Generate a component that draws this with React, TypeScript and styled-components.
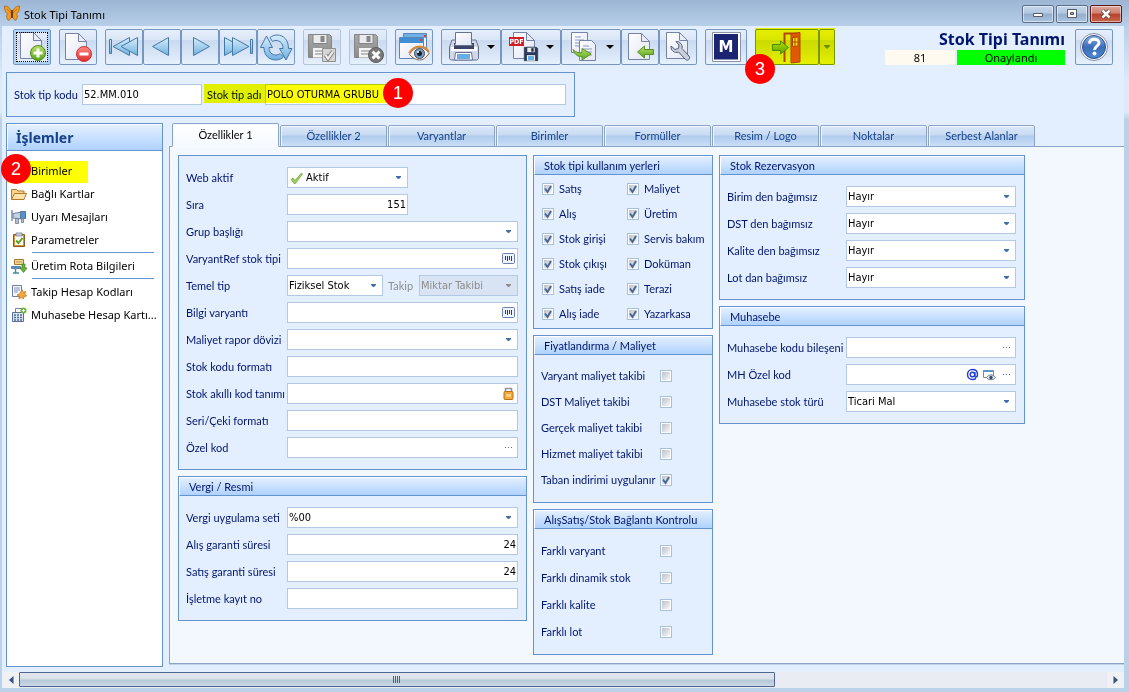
import React from "react";
import styled, { createGlobalStyle, css } from "styled-components";

const GlobalStyle = createGlobalStyle`
  *, *::before, *::after { box-sizing: border-box; }
  body {
    margin: 0;
    background: #bad1ea;
    color: #00156e;
    font-family: Lato, "Noto Sans", sans-serif;
    font-size: 11px;
    line-height: 14px;
  }
  button, input, select { font: inherit; color: inherit; margin: 0; padding: 0; }
`;

const chromeFont = `"Noto Sans", "Open Sans", sans-serif`;
const valueFont = `"DejaVu Sans Condensed", "DejaVu Sans", sans-serif`;
const line = "#6593cf";
const fieldLine = "#b3c8e2";

/* ---------- window frame ---------- */

const Window = styled.div`
  display: flex;
  flex-direction: column;
  min-height: 100vh;
  padding: 0 5px 4px 2px;
  background: linear-gradient(#9bb5d3 0, #b8cfe9 26px, #dceafa 80px, #dceafa 112px, #bad1ea 120px);
`;

const TitleBar = styled.header`
  display: flex;
  align-items: center;
  gap: 4px;
  height: 26px;
  padding-left: 2px;
  color: #000;
  font-family: ${chromeFont};
`;

const TitleText = styled.span`
  flex: 1;
  padding-top: 3px;
`;

const WindowButtons = styled.div`
  display: flex;
  gap: 2px;
  padding: 2px 2px 0 0;
`;

const WindowButton = styled.button<{ $danger?: boolean }>`
  display: grid;
  place-items: center;
  width: 32px;
  height: 18px;
  border: 1px solid ${(p) => (p.$danger ? "#5b1d1c" : "#5b6f8a")};
  border-radius: 2px;
  box-shadow: inset 0 0 0 1px rgba(255, 255, 255, 0.5);
  background: ${(p) =>
    p.$danger
      ? "linear-gradient(#dfa79d, #cf8172 45%, #b5412b 50%, #c9674c)"
      : "linear-gradient(#c4d6ea, #b3c8e0 45%, #93adcb 50%, #a9c3df)"};
`;

const Client = styled.main`
  display: flex;
  flex: 1;
  flex-direction: column;
  background: #e3efff;
`;

/* ---------- toolbar ---------- */

const Toolbar = styled.div`
  display: flex;
  gap: 8px;
  padding: 3px 11px 7px;
`;

const ButtonGroup = styled.div`
  position: relative;
  display: flex;
`;

const ToolButton = styled.button<{ $width?: number; $active?: boolean }>`
  display: block;
  flex: none;
  width: ${(p) => p.$width ?? 38}px;
  height: 36px;
  border: 1px solid #7797c3;
  border-radius: 2px;
  background: linear-gradient(#e6eefa, #dbe6f6 28%, #cbdaf0 30%, #d8e5f6 70%, #e6f1fd);
  ${(p) =>
    p.$active &&
    css`
      outline: 1px dotted #000;
      outline-offset: -4px;
      box-shadow: inset 0 0 0 2px #acd3f6;
    `}
  &:disabled { border-color: #b3c4dc; }
  svg { display: block; }
`;

const TitleBlock = styled.div`
  display: flex;
  flex-direction: column;
  align-items: flex-end;
  gap: 1px;
  margin-left: auto;
  padding-right: 2px;
  font-family: ${chromeFont};
`;

const PageTitle = styled.h1`
  margin: 0;
  font-size: 16px;
  line-height: 20px;
`;

const StatusRow = styled.div`
  display: flex;
  gap: 2px;
  color: #000;
`;

const Status = styled.span<{ $width: number; $bg: string }>`
  width: ${(p) => p.$width}px;
  line-height: 15px;
  text-align: center;
  background: ${(p) => p.$bg};
`;

/* ---------- annotations ---------- */

const Highlight = styled.span<{ $width: number; $height: number; $top?: number }>`
  position: absolute;
  left: 0;
  top: ${(p) => p.$top ?? 0}px;
  width: ${(p) => p.$width}px;
  height: ${(p) => p.$height}px;
  background: #ff0;
  mix-blend-mode: multiply;
  pointer-events: none;
`;

const Badge = styled.span<{ $left: number; $top: number }>`
  position: absolute;
  z-index: 2;
  left: ${(p) => p.$left}px;
  top: ${(p) => p.$top}px;
  width: 30px;
  height: 30px;
  border-radius: 50%;
  background: #f00;
  color: #fff;
  font: 18px/30px "Liberation Sans", sans-serif;
  text-align: center;
`;

/* ---------- form parts ---------- */

const FieldBox = styled.span<{ $width?: number; $disabled?: boolean }>`
  display: flex;
  align-items: center;
  flex: ${(p) => (p.$width ? `0 0 ${p.$width}px` : "1")};
  min-width: 0;
  height: 21px;
  border: 1px solid ${fieldLine};
  background: ${(p) => (p.$disabled ? "#d8e4f4" : "#fff")};
  color: ${(p) => (p.$disabled ? "#8d8d8d" : "#000")};
  font-family: ${valueFont};
`;

const TextInput = styled.input<{ $right?: boolean }>`
  flex: 1;
  min-width: 0;
  height: 19px;
  padding: 0 1px;
  border: 0;
  outline: 0;
  background: none;
  text-align: ${(p) => (p.$right ? "right" : "left")};
`;

const SelectBox = styled(FieldBox)`
  display: grid;
  align-items: center;
  > * { grid-area: 1 / 1; }
  > svg { pointer-events: none; }
  > svg:last-child { justify-self: end; margin-right: 5px; }
`;

const NativeSelect = styled.select<{ $icon?: boolean }>`
  appearance: none;
  width: 100%;
  height: 19px;
  padding: 0 16px 0 ${(p) => (p.$icon ? 18 : 1)}px;
  border: 0;
  outline: 0;
  background: none;
  &:disabled { opacity: 1; }
`;

const FieldButton = styled.button`
  display: grid;
  flex: none;
  place-items: center;
  width: 17px;
  height: 19px;
  border: 0;
  background: none;
`;

const FieldRow = styled.div<{ $label: number }>`
  display: flex;
  align-items: center;
  min-width: 0;
  > label:first-child { flex: 0 0 ${(p) => p.$label}px; min-width: 0; white-space: nowrap; }
`;

const MutedLabel = styled.label`
  flex: 0 0 36px;
  padding-left: 5px;
  color: #8d8d8d;
`;

const HeaderPanel = styled.form`
  display: flex;
  align-items: center;
  width: 569px;
  height: 45px;
  margin: 0 4px 6px;
  padding: 0 8px 0 7px;
  border: 1px solid ${line};
`;

const NameGroup = styled.div`
  position: relative;
  display: flex;
  flex: 1;
  align-items: center;
  min-width: 0;
  margin-left: 2px;
  > label { flex: 0 0 61px; padding-left: 3px; white-space: nowrap; }
`;

const CodeGroup = styled(FieldRow)`
  flex: 0 0 188px;
`;

/* ---------- body ---------- */

const Body = styled.div`
  display: flex;
  flex: 1;
  gap: 6px;
  padding: 0 0 5px 4px;
`;

const Sidebar = styled.nav`
  flex: 0 0 157px;
  min-width: 0;
  border: 1px solid ${line};
  background: #fff;
  font-family: ${chromeFont};
`;

const SidebarTitle = styled.h2`
  margin: 0;
  height: 26px;
  padding-left: 8px;
  border: 1px solid #fff;
  border-width: 1px 0 0 1px;
  box-shadow: 0 1px ${line};
  background: linear-gradient(#e3efff, #afd2ff);
  color: #15428b;
  font-size: 14px;
  line-height: 25px;
`;

const SidebarList = styled.ul`
  margin: 0;
  padding: 9px 0 0;
  list-style: none;
`;

const SidebarItem = styled.li<{ $rule?: boolean }>`
  position: relative;
  ${(p) =>
    p.$rule &&
    css`
      padding-bottom: 3px;
      background: linear-gradient(${line}, ${line}) 25px 24px / 122px 1px no-repeat;
    `}
`;

const SidebarLink = styled.a`
  display: flex;
  align-items: center;
  gap: 4px;
  height: 23px;
  padding-left: 4px;
  color: #000;
  text-decoration: none;
  white-space: nowrap;
  svg { flex: none; }
`;

const TabArea = styled.section`
  display: flex;
  flex: 1;
  flex-direction: column;
  min-width: 0;
  margin-bottom: 3px;
`;

const TabList = styled.div`
  display: flex;
  align-items: flex-end;
  gap: 1px;
  height: 24px;
  margin-bottom: -1px;
  padding-left: 3px;
`;

const Tab = styled.button<{ $active?: boolean }>`
  width: 107px;
  height: ${(p) => (p.$active ? 24 : 22)}px;
  border: 1px solid #8ba4c7;
  border-radius: 2px 2px 0 0;
  color: #15428b;
  box-shadow: inset 1px 1px #f2f7fd;
  background: linear-gradient(#dbe8f8, #c8daf2 45%, #afcbed 50%, #c9def8);
  ${(p) =>
    p.$active &&
    css`
      z-index: 1;
      border-bottom-color: #f8fbff;
      color: #000;
      background: linear-gradient(#fff, #f5f9ff);
    `}
`;

const TabPage = styled.div`
  display: flex;
  flex: 1;
  align-items: flex-start;
  gap: 6px;
  padding: 8px;
  border: 1px solid #8ba4c7;
  border-right: 0;
  box-shadow: 0 1px #c3d3e8;
  background: #f3f8ff;
`;

const Column = styled.div<{ $width: number }>`
  display: flex;
  flex: 0 0 ${(p) => p.$width}px;
  flex-direction: column;
  gap: 6px;
  min-width: 0;
`;

const PanelBox = styled.section`
  border: 1px solid ${line};
  background: #e3efff;
`;

const PanelTitle = styled.h3`
  margin: 0;
  height: 19px;
  padding-left: 9px;
  border: 1px solid #fff;
  border-right: 0;
  border-bottom-color: ${line};
  background: linear-gradient(#e3efff, #afd2ff);
  font-size: 11px;
  font-weight: 400;
  line-height: 17px;
  white-space: nowrap;
`;

const Fields = styled.div`
  display: flex;
  flex-direction: column;
  gap: 6px;
  padding: 11px 8px 11px 7px;
`;

const CheckGrid = styled.div`
  display: grid;
  grid-template-columns: 85px minmax(0, 1fr);
  grid-auto-rows: 25px;
  padding: 1px 0 2px 8px;
`;

const CheckRows = styled.div<{ $row: number }>`
  display: grid;
  grid-auto-rows: ${(p) => p.$row}px;
  padding: 8px 40px 9px 7px;
`;

const CheckRow = styled.div<{ $split?: boolean }>`
  display: flex;
  align-items: center;
  gap: ${(p) => (p.$split ? 2 : 5)}px;
  min-width: 0;
  justify-content: ${(p) => (p.$split ? "space-between" : "flex-start")};
  white-space: nowrap;
`;

const CheckBox = styled.span`
  display: grid;
  flex: none;
  > * { grid-area: 1 / 1; }
  > svg { pointer-events: none; }
`;

const NativeCheck = styled.input`
  appearance: none;
  width: 12px;
  height: 12px;
  border: 1px solid #a8c0de;
  background: linear-gradient(135deg, #bcc2ca, #f7f8f9) content-box, #fff;
  && { padding: 1px; }
`;

/* ---------- scroll bar ---------- */

const ScrollBar = styled.div`
  display: flex;
  align-items: center;
  height: 16px;
  background: #f0f1f4;
`;

const ScrollArrow = styled.button`
  display: grid;
  place-items: center;
  width: 17px;
  height: 16px;
  border: 0;
  background: none;
`;

const ScrollTrack = styled.div`
  flex: 1;
  height: 16px;
  background: #e9edf3;
`;

const ScrollThumb = styled.div`
  display: grid;
  place-items: center;
  width: 69.5%;
  height: 15px;
  border: 1px solid #4f6592;
  border-radius: 1px;
  background: linear-gradient(#e2e7ee, #d9e0e8 45%, #b7c8d9 55%, #cbd8e6);
`;

/* ---------- icons ---------- */

const Svg = ({ w = 36, h = 34, children }: { w?: number; h?: number; children: React.ReactNode }) => (
  <svg width={w} height={h} viewBox={`0 0 ${w} ${h}`} aria-hidden="true">
    {children}
  </svg>
);

const HiddenSvg = styled.svg`
  position: absolute;
`;

const Gradients = () => (
  <HiddenSvg width="0" height="0" aria-hidden="true">
    <defs>
      <linearGradient id="page" x1="0" y1="0" x2="1" y2="1"><stop offset="0" stopColor="#fff" /><stop offset="1" stopColor="#dfe5f3" /></linearGradient>
      <linearGradient id="blue" x1="0" y1="0" x2="0" y2="1"><stop offset="0" stopColor="#d9eefb" /><stop offset="1" stopColor="#6fb1e0" /></linearGradient>
      <linearGradient id="green" x1="0" y1="0" x2="0" y2="1"><stop offset="0" stopColor="#b9e06a" /><stop offset="1" stopColor="#55a51c" /></linearGradient>
      <linearGradient id="red" x1="0" y1="0" x2="0" y2="1"><stop offset="0" stopColor="#ff8a86" /><stop offset="1" stopColor="#dd2c2c" /></linearGradient>
      <linearGradient id="grey" x1="0" y1="0" x2="0" y2="1"><stop offset="0" stopColor="#a9a9a9" /><stop offset="1" stopColor="#8b8b8b" /></linearGradient>
      <linearGradient id="help" x1="0" y1="0" x2="0" y2="1"><stop offset="0" stopColor="#8fb5e6" /><stop offset="0.5" stopColor="#3b6cb8" /><stop offset="1" stopColor="#4f8ad4" /></linearGradient>
    </defs>
  </HiddenSvg>
);

const Page = ({ x, y, w = 21, h = 26 }: { x: number; y: number; w?: number; h?: number }) => (
  <g stroke="#7782a8" strokeWidth="1">
    <path d={`M${x} ${y}h${w - 8}l8 8v${h - 8}h-${w}z`} fill="url(#page)" />
    <path d={`M${x + w - 8} ${y}v8h8z`} fill="#e8ecf6" />
  </g>
);

const NewIcon = () => (
  <Svg>
    <Page x={6.5} y={2.5} />
    <circle cx="24" cy="23" r="7.5" fill="url(#green)" stroke="#4f8a1c" />
    <path d="M24 18.5v9M19.5 23h9" stroke="#fff" strokeWidth="3" />
  </Svg>
);
const DeleteIcon = () => (
  <Svg>
    <Page x={5.5} y={3.5} />
    <circle cx="24" cy="24" r="7.5" fill="url(#red)" stroke="#c33" />
    <path d="M19.5 24h9" stroke="#fff" strokeWidth="3" />
  </Svg>
);
const tri = { fill: "url(#blue)", stroke: "#4478a8", strokeWidth: 1, strokeLinejoin: "round" as const };
const FirstIcon = () => (
  <Svg><path {...tri} d="M3.5 9.5h2v14h-2z" /><path {...tri} d="M23.5 7.5v18L7 16.5z" /><path {...tri} d="M31.5 7.5v18L15 16.5z" /></Svg>
);
const PrevIcon = () => <Svg><path {...tri} d="M24.5 7.5v18L8.5 16.5z" /></Svg>;
const NextIcon = () => <Svg><path {...tri} d="M11.5 7.5v18l16-9z" /></Svg>;
const LastIcon = () => (
  <Svg><path {...tri} d="M4.5 7.5v18l16.5-9z" /><path {...tri} d="M12.5 7.5v18L29 16.5z" /><path {...tri} d="M30.5 9.5h2v14h-2z" /></Svg>
);
const RefreshIcon = () => (
  <Svg>
    <g {...tri}>
      <path d="M2.5 17.5 8.5 6l6 11.5h-3.5c0 5 3 7.5 7 7.5 1.5 0 3-.5 4-1.500l3.500 3.500c-2 2-5 3-7.500 3C10.500 30 6 25 6 17.500z" />
      <path d="M34 18.500 28 30l-6.500-11.500H25c0-5-3-8-7-8-1.500 0-3 .5-3.500 1L12 7.500c2-1.500 4-2.500 7-2.500 7 0 11.500 5.500 11.500 13.500z" />
    </g>
  </Svg>
);

const Floppy = ({ x, y, s, body, edge }: { x: number; y: number; s: number; body: string; edge: string }) => (
  <g transform={`translate(${x} ${y}) scale(${s / 24})`}>
    <path d="M.5.5h21l2 2v21H.5z" fill={body} stroke={edge} />
    <path d="M5 .5h14v9H5z" fill="#e9ebee" stroke={edge} />
    <path d="M12.500 2h4v6h-4z" fill={edge} />
    <path d="M5 14h14v9.500H5z" fill="#f3f4f6" />
    <path d="M7 17h10M7 20h10" stroke={edge} />
  </g>
);

const SaveIcon = () => (
  <Svg>
    <Floppy x={4} y={4} s={24} body="url(#grey)" edge="#858585" />
    <path d="M18.500 18.500h13v13h-13z" fill="#d5d5d5" stroke="#8f8f8f" />
    <path d="m21.500 25 2.500 3.500 5-7" fill="none" stroke="#888" strokeWidth="4" />
    <path d="m21.500 25 2.500 3.500 5-7" fill="none" stroke="#f4f4f4" strokeWidth="2" />
  </Svg>
);
const SaveCloseIcon = () => (
  <Svg>
    <Floppy x={4} y={4} s={24} body="url(#grey)" edge="#858585" />
    <circle cx="26" cy="25" r="7.500" fill="#777" stroke="#5f5f5f" />
    <path d="m22.500 21.500 7 7m0-7-7 7" stroke="#fff" strokeWidth="3" />
  </Svg>
);
const PreviewIcon = () => (
  <Svg>
    <path d="M7.500 3.500h23v17h-23z" fill="#f2f6fc" stroke="#5a86b8" />
    <path d="M8 4h22v4H8z" fill="#6db1e6" /><path d="M28 5h2v2h-2z" fill="#e33" />
    <path d="M3.500 7.500h24v21h-24z" fill="url(#page)" stroke="#5a86b8" />
    <path d="M4 8h23v5H4z" fill="#3f8fd2" /><path d="M24 9h2v2h-2z" fill="#e33" />
    <path d="M13.500 24.500c3-5 6-7 10-7s7.500 2.500 9.500 6c-3 4.500-6 6.500-9.500 6.500s-7-2-10-5.500z" fill="#f5f1ec" stroke="#82675a" />
    <path d="M13 23c3-4.500 6-6.500 10.500-6.500S31.500 19 33 22" fill="none" stroke="#d78a3e" strokeWidth="2" />
    <circle cx="23.500" cy="23.500" r="5" fill="#7f9bb5" stroke="#33506e" /><circle cx="23.500" cy="23.500" r="2.500" fill="#13202e" />
    <circle cx="22" cy="22" r="1" fill="#fff" />
  </Svg>
);
const Caret = ({ x, y = 17 }: { x: number; y?: number }) => <path d={`M${x - 4} ${y - 2}h8l-4 4z`} fill="#000" />;
const PrintIcon = () => (
  <Svg w={58}>
    <path d="M10 10h24l2.500 7v11c0 1-1 2-2 2h-25c-1 0-2-1-2-2V17z" fill="#d2d8e8" stroke="#66718f" />
    <path d="M9 17h26v4H9z" fill="#fff" />
    <path d="M12 13h20v6H12z" fill="#3b4666" />
    <path d="M13.500 2.500h16v11l1 2h-18l1-2z" fill="url(#page)" stroke="#66718f" />
    <path d="M13.500 22.500h16l1 7.500h-18z" fill="#fff" stroke="#66718f" /><path d="M15 24h13v5H15z" fill="#67aee6" />
    <Caret x={49} />
  </Svg>
);
const PdfIcon = () => (
  <Svg w={58}>
    <Page x={11.5} y={2.5} />
    <path d="M7 7h15v9H7z" fill="#cf2027" />
    <text x="14.500" y="14" fontSize="7" fontWeight="700" fontFamily="DejaVu Sans Condensed" textAnchor="middle" fill="#fff">PDF</text>
    <Floppy x={22} y={17} s={14} body="#2b3a5c" edge="#1d2740" />
    <path d="M26 26h6v4h-6z" fill="#67aee6" />
    <Caret x={48} />
  </Svg>
);
const CopyIcon = () => (
  <Svg w={58}>
    <path d="M9.500 2.500h16v20h-16z" fill="url(#page)" stroke="#7782a8" />
    <path d="M13 7h6M13 10h9M13 13h9M13 16h9" stroke="#8d9ac0" />
    <path d="M17.500 10.500h12l4 4v16h-16z" fill="url(#page)" stroke="#7782a8" />
    <path d="M21 16h6M21 19h9M21 22h9M21 25h9" stroke="#8d9ac0" />
    <path d="M11 19.500c3 3 6 3.500 9 3v-4l9 5.500-9 6v-3.500c-4 .5-7.500-2-9-7z" fill="url(#green)" stroke="#5a8f22" />
    <Caret x={48} />
  </Svg>
);
const ImportIcon = () => (
  <Svg>
    <Page x={6.5} y={3.5} />
    <path d="m15.500 22 7-6v3.500h9v5h-9V28z" fill="url(#green)" stroke="#5a8f22" />
  </Svg>
);
const WrenchIcon = () => (
  <Svg>
    <Page x={6.5} y={2.5} />
    <path d="M16 11.500c3.500-.5 7 3 6 7l7 7.500c2 2.500-1 5.500-3.500 3.500L18.500 22c-4 1.500-8-1.500-7.500-6l4 3.500 3.500-1 .5-3.500z" fill="#c9cfdb" stroke="#525c78" />
  </Svg>
);
const LogoIcon = () => (
  <Svg w={40}>
    <path d="M6.500 2.500h28v29h-28z" fill="#fff" stroke="#8b93a8" />
    <path d="M8 4h24v25.500H8z" fill="#1b2470" />
    <text x="20" y="22" fontSize="15" fontWeight="700" fontFamily="DejaVu Sans" textAnchor="middle" fill="#fff">M</text>
  </Svg>
);
const ExitIcon = () => (
  <Svg w={62}>
    <path d="M28.500 32V3.500h15" fill="none" stroke="#b0461b" strokeWidth="2" />
    <path d="m35 4 9-1.500V32l-9 1z" fill="#e2591f" stroke="#b0461b" />
    <path d="M36.500 7.500 42 7v9l-5.500.5zM39 7v9M36.500 12H42" fill="#f4e6c0" stroke="#b0461b" />
    <path d="M16.500 14.500h8v-3.500l8 6.500-8 6.500V20.500h-8z" fill="url(#green)" stroke="#4d8b18" />
  </Svg>
);
const HelpIcon = () => (
  <Svg>
    <circle cx="18" cy="17" r="13.500" fill="#fff" stroke="#7f8da8" />
    <circle cx="18" cy="17" r="11.500" fill="url(#help)" stroke="#2c4e8e" />
    <path d="M13.500 13.500c0-6 9.500-5.500 9.500-.500 0 3-4.500 3.500-4.500 7" fill="none" stroke="#fff" strokeWidth="3" />
    <circle cx="18.500" cy="23.500" r="2" fill="#fff" />
  </Svg>
);
const ArrowIcon = ({ fill = "#3f6fa8" }: { fill?: string }) => (
  <svg width="7" height="4" viewBox="0 0 7 4" aria-hidden="true"><path d="M1 0h5v1L4 3H3L1 1z" fill={fill} /></svg>
);
const TickIcon = () => (
  <svg width="16" height="14" viewBox="-2 0 16 14" aria-hidden="true">
    <path d="M1 8.500 3 7l2 2.500L11.500 2l1 1L5.500 12.500H4z" fill="#9ccb62" stroke="#6fa53c" strokeWidth=".7" />
  </svg>
);
const BarcodeIcon = () => (
  <svg width="13" height="11" viewBox="0 0 13 11" aria-hidden="true">
    <rect x=".5" y=".5" width="12" height="10" rx="1" fill="#eef2fa" stroke="#6d80b5" />
    <path d="M3.500 3v4M5.500 3v5M7.500 3v4M9.500 3v5" stroke="#333b55" />
  </svg>
);
const LockIcon = () => (
  <svg width="11" height="13" viewBox="0 0 11 13" aria-hidden="true">
    <path d="M2.500 6V1.500h6V6" fill="none" stroke="#8b93a5" strokeWidth="1.500" />
    <rect x="1" y="4.500" width="9" height="8" rx="1" fill="#f3a93a" stroke="#b9701a" /><path d="M3 7h5v3H3z" fill="#fbd079" />
  </svg>
);
const DotsIcon = () => (
  <svg width="9" height="2" viewBox="0 0 9 2" aria-hidden="true"><path d="M1 0h1v1H1zM4 0h1v1H4zM7 0h1v1H7z" fill="#4a6a94" /></svg>
);
const AtIcon = () => (
  <svg width="13" height="13" viewBox="0 0 13 13" aria-hidden="true">
    <circle cx="6.500" cy="6.500" r="2.300" fill="none" stroke="#2440d8" strokeWidth="1.500" />
    <path d="M8.800 4v4c0 1.800 2.700 1.500 2.700-1.500 0-3-2-5-5-5s-5 2.200-5 5 2 5 5 5c1.500 0 2.500-.4 3.500-1" fill="none" stroke="#2440d8" strokeWidth="1.500" />
  </svg>
);
const ViewIcon = () => (
  <svg width="13" height="12" viewBox="0 0 13 12" aria-hidden="true">
    <path d="M.5 1.500h10v7H.5z" fill="#fff" stroke="#6d8fb5" /><path d="M.5 1h10v2H.5z" fill="#5b93cc" />
    <path d="M3.500 8.500c2.500-3.500 6.500-3.500 9 0-2.500 3-6.500 3-9 0z" fill="#e8ecf2" stroke="#6a7488" /><circle cx="8" cy="8.500" r="1.700" fill="#3d4c66" />
  </svg>
);

const Small = ({ children }: { children: React.ReactNode }) => (
  <svg width="16" height="16" viewBox="0 0 16 16" aria-hidden="true">{children}</svg>
);
const FolderIcon = () => (
  <Small>
    <path d="M.5 13V3.500h5l1.500 1.500h6V8" fill="#f6d48b" stroke="#b5772a" />
    <path d="M.5 13.500 3.500 7.500h12l-2.500 6z" fill="#fbe3ab" stroke="#b5772a" />
  </Small>
);
const CameraIcon = () => (
  <Small>
    <path d="M1 1v11" stroke="#8591a8" strokeWidth="1.500" />
    <path d="M2 4.500 11 3v7l-9-1z" fill="#c3d3e6" stroke="#6b7f9d" /><path d="M9.500 2.500h5v7h-5z" fill="#4f93cf" stroke="#5b7396" />
    <path d="M4.500 9.500h3v5h-3zM10.500 9.500h2v4h-2z" fill="#b5bfd0" stroke="#6b7a93" strokeWidth=".8" />
  </Small>
);
const ClipboardIcon = () => (
  <Small>
    <path d="M2.500 2.500h11v12h-11z" fill="#d8913b" stroke="#8f5a1d" /><path d="M4 4h8v9H4z" fill="#fff" />
    <path d="M5 1h6v3H5z" fill="#c9ced9" stroke="#7b8496" strokeWidth=".8" />
    <path d="m5 8.500 2.500 2.500L11.500 6" fill="none" stroke="#55a51c" strokeWidth="2" />
  </Small>
);
const RouteIcon = () => (
  <Small>
    <path d="M3.500 1.500h9v5h-9z" fill="#f3d48b" stroke="#a27a2e" /><path d="M5.500 4h5" stroke="#8b6a2a" strokeDasharray="1 1" />
    <path d="M.5 8.500h9v2h-9z" fill="#5b93cc" stroke="#3c648f" strokeWidth=".7" /><path d="M4.500 10v5M2 15h6" stroke="#3f8f9e" strokeWidth="1.500" />
    <path d="M11 6h3v4h2l-3.500 4.500L9 10h2z" fill="#6db33a" stroke="#3f7d1c" strokeWidth=".7" />
  </Small>
);
const GearDocIcon = () => (
  <Small>
    <path d="M1.500 1.500h9v11h-9z" fill="#f5f7fc" stroke="#6c7ea8" /><path d="M3 4h6M3 6h6M3 8h4" stroke="#7d90bb" />
    <path d="m11 5.500 1.200 2.700 2.800-.700-1.200 2.500 2 2-2.800.5-.5 2.500-2-1.500-2.500 1.500.300-2.800L6 11l2.500-1z" fill="#f3a93a" stroke="#b9701a" strokeWidth=".7" />
  </Small>
);
const LedgerIcon = () => (
  <Small>
    <path d="M4.500 1.500h7v5h-7z" fill="#fff" stroke="#7284a5" />
    <path d="M1.500 5.500h11v9h-11z" fill="#dde6f3" stroke="#5b7091" /><path d="M3 8h2M6 8h2M9 8h2M3 10.500h2M6 10.500h2M9 10.500h2M3 13h2M6 13h2M9 13h2" stroke="#4c6f9e" strokeWidth="1.300" />
    <circle cx="12.500" cy="3.500" r="3" fill="#6db33a" /><path d="M12.500 2v3M11 3.500h3" stroke="#fff" />
  </Small>
);
const ButterflyIcon = () => (
  <Small>
    <path d="M7.500 7C6.500 3 3 .5.5 1c0 3.500.5 6.500 3 8-1.500 1.500-1 5 1 6.500 1.500-.5 2.500-2 3-4z" fill="#f29a1f" stroke="#9a5208" strokeWidth=".6" />
    <path d="M8.500 7C9.500 3 13 .5 15.500 1c0 3.500-.5 6.500-3 8 1.500 1.500 1 5-1 6.500-1.500-.5-2.500-2-3-4z" fill="#f29a1f" stroke="#9a5208" strokeWidth=".6" />
    <path d="M8 5v8" stroke="#4d2a0a" strokeWidth="1.500" />
    <path d="M3 4l4 4M13 4 9 8" stroke="#b8650f" strokeWidth=".6" />
  </Small>
);

/* ---------- composed controls ---------- */

const Select = ({ id, value, width, icon, disabled }: { id: string; value?: string; width?: number; icon?: boolean; disabled?: boolean }) => (
  <SelectBox $width={width} $disabled={disabled}>
    {icon && <TickIcon />}
    <NativeSelect id={id} $icon={icon} disabled={disabled}>
      <option>{value ?? ""}</option>
    </NativeSelect>
    <ArrowIcon fill={disabled ? "#8d8d8d" : undefined} />
  </SelectBox>
);

const Field = ({ id, value, width, right, tail }: { id: string; value?: string; width?: number; right?: boolean; tail?: [string, React.ReactNode][] }) => (
  <FieldBox $width={width}>
    <TextInput id={id} defaultValue={value} $right={right} />
    {tail?.map(([name, icon]) => (
      <FieldButton key={name} type="button" aria-label={name}>{icon}</FieldButton>
    ))}
  </FieldBox>
);

const Row = ({ id, label, width = 101, children }: { id: string; label: string; width?: number; children: React.ReactNode }) => (
  <FieldRow $label={width}>
    <label htmlFor={id}>{label}</label>
    {children}
  </FieldRow>
);

const Check = ({ id, checked }: { id: string; checked?: boolean }) => (
  <CheckBox>
    <NativeCheck id={id} type="checkbox" defaultChecked={checked} />
    {checked && (
      <svg width="12" height="12" viewBox="0 0 12 12" aria-hidden="true">
        <path d="m3 5.500 2.500 3.500L9 3" fill="none" stroke="#4a6896" strokeWidth="2" />
      </svg>
    )}
  </CheckBox>
);

const Panel = ({ title, children }: { title?: string; children: React.ReactNode }) => (
  <PanelBox>
    {title && <PanelTitle>{title}</PanelTitle>}
    {children}
  </PanelBox>
);

const tabs = ["Özellikler 1", "Özellikler 2", "Varyantlar", "Birimler", "Formüller", "Resim / Logo", "Noktalar", "Serbest Alanlar"];

const usage = ["Satış", "Maliyet", "Alış", "Üretim", "Stok girişi", "Servis bakım", "Stok çıkışı", "Doküman", "Satış iade", "Terazi", "Alış iade", "Yazarkasa"];

const pricing: [string, boolean][] = [
  ["Varyant maliyet takibi", false],
  ["DST Maliyet takibi", false],
  ["Gerçek maliyet takibi", false],
  ["Hizmet maliyet takibi", false],
  ["Taban indirimi uygulanır", true],
];

const linkChecks = ["Farklı varyant", "Farklı dinamik stok", "Farklı kalite", "Farklı lot"];
const reservations = ["Birim den bağımsız", "DST den bağımsız", "Kalite den bağımsız", "Lot dan bağımsız"];

const menu: { label: string; icon: React.ReactNode; rule?: boolean }[] = [
  { label: "Birimler", icon: <ClipboardIcon /> },
  { label: "Bağlı Kartlar", icon: <FolderIcon /> },
  { label: "Uyarı Mesajları", icon: <CameraIcon /> },
  { label: "Parametreler", icon: <ClipboardIcon />, rule: true },
  { label: "Üretim Rota Bilgileri", icon: <RouteIcon />, rule: true },
  { label: "Takip Hesap Kodları", icon: <GearDocIcon /> },
  { label: "Muhasebe Hesap Kartı...", icon: <LedgerIcon /> },
];

export default function App() {
  return (
    <Window>
      <GlobalStyle />
      <Gradients />
      <TitleBar>
        <ButterflyIcon />
        <TitleText>Stok Tipi Tanımı</TitleText>
        <WindowButtons>
          <WindowButton aria-label="Simge durumuna küçült">
            <Svg w={12} h={10}><path d="M1.500 4.500h9v3h-9z" fill="#fff" stroke="#555d6b" /></Svg>
          </WindowButton>
          <WindowButton aria-label="Ekranı kapla">
            <Svg w={12} h={10}><path d="M1.500.5h9v8h-9z" fill="#fff" stroke="#555d6b" /><path d="M4.500 3.500h3v2h-3z" fill="#8fa6c2" stroke="#555d6b" /></Svg>
          </WindowButton>
          <WindowButton $danger aria-label="Kapat">
            <Svg w={12} h={10}>
              <path d="m2.500 1.500 7 7m0-7-7 7" stroke="#5b3838" strokeWidth="4" />
              <path d="m2.500 1.500 7 7m0-7-7 7" stroke="#fff" strokeWidth="2.500" />
            </Svg>
          </WindowButton>
        </WindowButtons>
      </TitleBar>

      <Client>
        <Toolbar>
          <ToolButton $active aria-label="Yeni"><NewIcon /></ToolButton>
          <ToolButton aria-label="Sil"><DeleteIcon /></ToolButton>
          <ButtonGroup>
            <ToolButton aria-label="İlk"><FirstIcon /></ToolButton>
            <ToolButton aria-label="Önceki"><PrevIcon /></ToolButton>
            <ToolButton aria-label="Sonraki"><NextIcon /></ToolButton>
            <ToolButton aria-label="Son"><LastIcon /></ToolButton>
            <ToolButton aria-label="Yenile"><RefreshIcon /></ToolButton>
          </ButtonGroup>
          <ToolButton disabled aria-label="Kaydet"><SaveIcon /></ToolButton>
          <ToolButton disabled aria-label="Vazgeç"><SaveCloseIcon /></ToolButton>
          <ToolButton aria-label="Önizleme"><PreviewIcon /></ToolButton>
          <ButtonGroup>
            <ToolButton $width={60} aria-label="Yazdır"><PrintIcon /></ToolButton>
            <ToolButton $width={60} aria-label="PDF"><PdfIcon /></ToolButton>
            <ToolButton $width={60} aria-label="Kopyala"><CopyIcon /></ToolButton>
            <ToolButton aria-label="Aktar"><ImportIcon /></ToolButton>
            <ToolButton aria-label="Ayarlar"><WrenchIcon /></ToolButton>
          </ButtonGroup>
          <ToolButton $width={42} aria-label="Logo"><LogoIcon /></ToolButton>
          <ButtonGroup>
            <ToolButton $width={64} aria-label="Çıkış"><ExitIcon /></ToolButton>
            <ToolButton $width={16} aria-label="Çıkış seçenekleri">
              <Svg w={14}><path d="M4 15h6v1l-3 3-3-3z" fill="#6f8f9a" /></Svg>
            </ToolButton>
            <Highlight $width={80} $height={37} $top={-1} />
            <Badge $left={-10} $top={25}>3</Badge>
          </ButtonGroup>
          <TitleBlock>
            <PageTitle>Stok Tipi Tanımı</PageTitle>
            <StatusRow>
              <Status $width={70} $bg="#fffaf0">81</Status>
              <Status $width={108} $bg="#00ff00">Onaylandı</Status>
            </StatusRow>
          </TitleBlock>
          <ToolButton aria-label="Yardım"><HelpIcon /></ToolButton>
        </Toolbar>

        <HeaderPanel>
          <CodeGroup $label={68}>
            <label htmlFor="code">Stok tip kodu</label>
            <Field id="code" value="52.MM.010" />
          </CodeGroup>
          <NameGroup>
            <label htmlFor="name">Stok tip adı</label>
            <Field id="name" value="POLO OTURMA GRUBU" />
            <Highlight $width={183} $height={19} />
            <Badge $left={179} $top={-6}>1</Badge>
          </NameGroup>
        </HeaderPanel>

        <Body>
          <Sidebar>
            <SidebarTitle>İşlemler</SidebarTitle>
            <SidebarList>
              {menu.map((item, i) => (
                <SidebarItem key={item.label} $rule={item.rule}>
                  <SidebarLink href="#">{item.icon}{item.label}</SidebarLink>
                  {i === 0 && (
                    <>
                      <Highlight $width={81} $height={22} $top={2} />
                      <Badge $left={-6} $top={-5}>2</Badge>
                    </>
                  )}
                </SidebarItem>
              ))}
            </SidebarList>
          </Sidebar>

          <TabArea>
            <TabList role="tablist">
              {tabs.map((t, i) => (
                <Tab key={t} role="tab" aria-selected={i === 0} $active={i === 0}>{t}</Tab>
              ))}
            </TabList>
            <TabPage role="tabpanel">
              <Column $width={349}>
                <Panel>
                  <Fields>
                    <Row id="web" label="Web aktif"><Select id="web" value="Aktif" width={121} icon /></Row>
                    <Row id="order" label="Sıra"><Field id="order" value="151" width={121} right /></Row>
                    <Row id="group" label="Grup başlığı"><Select id="group" /></Row>
                    <Row id="ref" label="VaryantRef stok tipi"><Field id="ref" tail={[["Barkod", <BarcodeIcon />]]} /></Row>
                    <Row id="base" label="Temel tip">
                      <Select id="base" value="Fiziksel Stok" width={96} />
                      <MutedLabel htmlFor="track">Takip</MutedLabel>
                      <Select id="track" value="Miktar Takibi" disabled />
                    </Row>
                    <Row id="info" label="Bilgi varyantı"><Field id="info" tail={[["Barkod", <BarcodeIcon />]]} /></Row>
                    <Row id="cur" label="Maliyet rapor dövizi"><Select id="cur" /></Row>
                    <Row id="fmt" label="Stok kodu formatı"><Field id="fmt" /></Row>
                    <Row id="smart" label="Stok akıllı kod tanımı"><Field id="smart" tail={[["Kilit", <LockIcon />]]} /></Row>
                    <Row id="serial" label="Seri/Çeki formatı"><Field id="serial" /></Row>
                    <Row id="special" label="Özel kod"><Field id="special" tail={[["Seç", <DotsIcon />]]} /></Row>
                  </Fields>
                </Panel>
                <Panel title="Vergi / Resmi">
                  <Fields>
                    <Row id="tax" label="Vergi uygulama seti"><Select id="tax" value="%00" /></Row>
                    <Row id="buyw" label="Alış garanti süresi"><Field id="buyw" value="24" right /></Row>
                    <Row id="sellw" label="Satış garanti süresi"><Field id="sellw" value="24" right /></Row>
                    <Row id="reg" label="İşletme kayıt no"><Field id="reg" /></Row>
                  </Fields>
                </Panel>
              </Column>

              <Column $width={180}>
                <Panel title="Stok tipi kullanım yerleri">
                  <CheckGrid>
                    {usage.map((u, i) => (
                      <CheckRow key={u}>
                        <Check id={`use${i}`} checked />
                        <label htmlFor={`use${i}`}>{u}</label>
                      </CheckRow>
                    ))}
                  </CheckGrid>
                </Panel>
                <Panel title="Fiyatlandırma / Maliyet">
                  <CheckRows $row={26}>
                    {pricing.map(([p, on], i) => (
                      <CheckRow key={p} $split>
                        <label htmlFor={`price${i}`}>{p}</label>
                        <Check id={`price${i}`} checked={on} />
                      </CheckRow>
                    ))}
                  </CheckRows>
                </Panel>
                <Panel title="AlışSatış/Stok Bağlantı Kontrolu">
                  <CheckRows $row={27}>
                    {linkChecks.map((l, i) => (
                      <CheckRow key={l} $split>
                        <label htmlFor={`link${i}`}>{l}</label>
                        <Check id={`link${i}`} />
                      </CheckRow>
                    ))}
                  </CheckRows>
                </Panel>
              </Column>

              <Column $width={306}>
                <Panel title="Stok Rezervasyon">
                  <Fields>
                    {reservations.map((r, i) => (
                      <Row key={r} id={`res${i}`} label={r} width={119}><Select id={`res${i}`} value="Hayır" /></Row>
                    ))}
                  </Fields>
                </Panel>
                <Panel title="Muhasebe">
                  <Fields>
                    <Row id="acc" label="Muhasebe kodu bileşeni" width={119}><Field id="acc" tail={[["Seç", <DotsIcon />]]} /></Row>
                    <Row id="mh" label="MH Özel kod" width={119}>
                      <Field id="mh" tail={[["Adres", <AtIcon />], ["Göster", <ViewIcon />], ["Seç", <DotsIcon />]]} />
                    </Row>
                    <Row id="kind" label="Muhasebe stok türü" width={119}><Select id="kind" value="Ticari Mal" /></Row>
                  </Fields>
                </Panel>
              </Column>
            </TabPage>
          </TabArea>
        </Body>

        <ScrollBar>
          <ScrollArrow aria-label="Sola kaydır"><Svg w={6} h={10}><path d="M5.500 1v8L1 5z" fill="#3d4f7c" /></Svg></ScrollArrow>
          <ScrollTrack>
            <ScrollThumb><Svg w={8} h={7}><path d="M.5 0v7M2.500 0v7M4.500 0v7M6.500 0v7" stroke="#4f5f86" /></Svg></ScrollThumb>
          </ScrollTrack>
          <ScrollArrow aria-label="Sağa kaydır"><Svg w={6} h={10}><path d="M.5 1v8L5 5z" fill="#3d4f7c" /></Svg></ScrollArrow>
        </ScrollBar>
      </Client>
    </Window>
  );
}
